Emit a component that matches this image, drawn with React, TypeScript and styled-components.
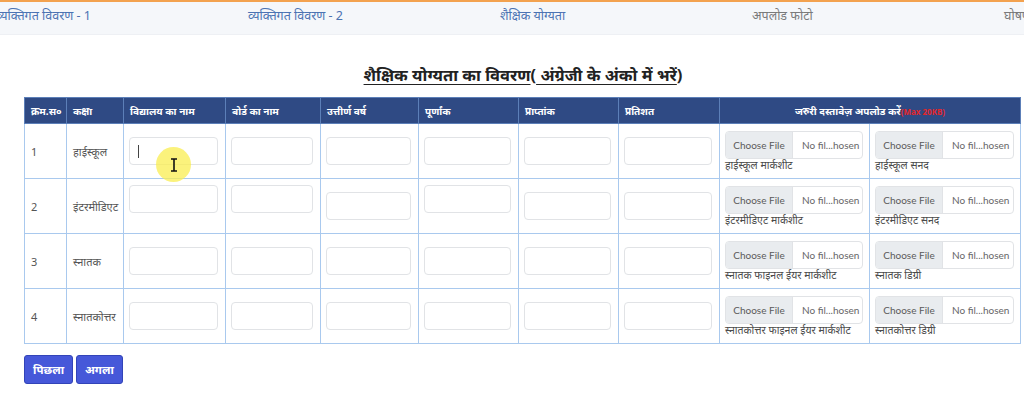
import React from "react";
import styled, { createGlobalStyle } from "styled-components";

const GlobalStyle = createGlobalStyle`
  html, body { margin: 0; padding: 0; background: #ffffff; }
  body { font-family: "Noto Sans", "DejaVu Sans", sans-serif; color: #333; overflow: hidden; }
  * { box-sizing: border-box; }
`;

const Page = styled.div`
  width: 1024px;
  height: 415px;
  position: relative;
  overflow: hidden;
`;

const Nav = styled.nav`
  height: 35px;
  border-top: 2px solid #f3a24f;
  background: #f5f7fa;
  border-bottom: 1px solid #eef0f4;
  display: flex;
  margin-left: -4px;
  overflow: hidden;
`;

const Tab = styled.div<{ $muted?: boolean }>`
  flex: 0 0 252px;
  font-size: 12.5px;
  line-height: 28px;
  color: ${(p) => (p.$muted ? "#7a7a7a" : "#4b73b3")};
  white-space: nowrap;
`;

const Content = styled.div`
  padding: 0 4px 0 24px;
`;

const Heading = styled.h2`
  margin: 28px 0 10px;
  text-align: center;
  font-size: 16.5px;
  line-height: 24px;
  font-weight: 700;
  color: #222;
  padding-left: 2px;
`;

const U = styled.span`
  text-decoration: underline;
  text-underline-offset: 3px;
  text-decoration-thickness: 1px;
`;

const Table = styled.table`
  width: 996px;
  border-collapse: collapse;
  table-layout: fixed;
`;

const Th = styled.th<{ $center?: boolean }>`
  background: #2f4a84;
  color: #ffffff;
  font-size: 10px;
  font-weight: 700;
  height: 26px;
  padding: 0 6px;
  text-align: ${(p) => (p.$center ? "center" : "left")};
  border: 1px solid #5c7fb8;
  white-space: nowrap;
`;

const Red = styled.span`
  color: #e3262b;
  font-size: 8px;
`;

const Td = styled.td<{ $top?: boolean }>`
  height: 55px;
  border: 1px solid #a9c9ee;
  padding: ${(p) => (p.$top ? "6px 7px 0 5px" : "0 7px 0 5px")};
  vertical-align: ${(p) => (p.$top ? "top" : "middle")};
  font-size: 11px;
  color: #555;
  background: #fff;
`;

const TextTd = styled(Td)`
  padding: 0 6px;
`;

const FileTd = styled.td`
  height: 55px;
  border: 1px solid #a9c9ee;
  padding: 7px 6px 0 5px;
  vertical-align: top;
  background: #fff;
`;

const InputWrap = styled.div`
  position: relative;
`;

const TextInput = styled.input`
  display: block;
  width: 100%;
  height: 28px;
  border: 1px solid #e1e3e6;
  border-radius: 4px;
  background: #fff;
  outline: none;
  padding: 0 8px;
  font-size: 12px;
`;

const Caret = styled.span`
  position: absolute;
  left: 9px;
  top: 8px;
  width: 1px;
  height: 13px;
  background: #444;
`;

const FileBox = styled.label`
  display: flex;
  height: 28px;
  border: 1px solid #e1e3e6;
  border-radius: 4px;
  overflow: hidden;
  font-family: Lato, "Noto Sans", sans-serif;
  font-size: 10px;
  color: #666;
  cursor: pointer;
`;

const FileBtn = styled.span`
  flex: 0 0 67px;
  background: #e9ecef;
  border-right: 1px solid #e1e3e6;
  display: flex;
  align-items: center;
  justify-content: center;
  color: #5a5a5a;
`;

const FileName = styled.span`
  flex: 1;
  display: flex;
  align-items: center;
  padding-left: 9px;
  color: #666;
  white-space: nowrap;
`;

const FileLabel = styled.div`
  font-size: 10.5px;
  color: #4a4a4a;
  line-height: 13px;
  white-space: nowrap;
`;

const Actions = styled.div`
  display: flex;
  gap: 3px;
  margin-top: 11px;
`;

const Button = styled.button`
  height: 29px;
  padding: 0 8px;
  background: #4658d9;
  border: 1px solid #3244b8;
  border-radius: 3px;
  color: #fff;
  font-family: "Noto Sans", sans-serif;
  font-size: 11.5px;
  font-weight: 700;
`;

const CursorHalo = styled.div`
  position: absolute;
  left: 156px;
  top: 147px;
  width: 35px;
  height: 35px;
  border-radius: 50%;
  background: rgba(250, 238, 80, 0.75);
  display: flex;
  align-items: center;
  justify-content: center;
  pointer-events: none;
`;

type Row = {
  n: string;
  cls: string;
  docs: [string, string];
  raised: boolean[];
};

const rows: Row[] = [
  { n: "1", cls: "हाईस्कूल", docs: ["हाईस्कूल मार्कशीट", "हाईस्कूल सनद"], raised: [] },
  { n: "2", cls: "इंटरमीडिएट", docs: ["इंटरमीडिएट मार्कशीट", "इंटरमीडिएट सनद"], raised: [true, true, false, true, false, false] },
  { n: "3", cls: "स्नातक", docs: ["स्नातक फाइनल ईयर मार्कशीट", "स्नातक डिग्री"], raised: [] },
  { n: "4", cls: "स्नातकोत्तर", docs: ["स्नातकोत्तर फाइनल ईयर मार्कशीट", "स्नातकोत्तर डिग्री"], raised: [] },
];

const colWidths = [42, 57, 102, 95, 98, 100, 100, 101, 150, 151];

const FileField = ({ label }: { label: string }) => (
  <>
    <FileBox>
      <FileBtn>Choose File</FileBtn>
      <FileName>No fil...hosen</FileName>
    </FileBox>
    <FileLabel>{label}</FileLabel>
  </>
);

export default function App() {
  return (
    <Page>
      <GlobalStyle />
      <Nav>
        <Tab>व्यक्तिगत विवरण - 1</Tab>
        <Tab>व्यक्तिगत विवरण - 2</Tab>
        <Tab>शैक्षिक योग्यता</Tab>
        <Tab $muted>अपलोड फोटो</Tab>
        <Tab $muted>घोषणा</Tab>
      </Nav>
      <Content>
        <Heading>
          <U>शैक्षिक योग्यता का विवरण</U>(<U> अंग्रेजी के अंको में भरें</U>)
        </Heading>
        <Table>
          <colgroup>
            {colWidths.map((w, i) => (
              <col key={i} style={{ width: w }} />
            ))}
          </colgroup>
          <thead>
            <tr>
              <Th>क्रम.स०</Th>
              <Th>कक्षा</Th>
              <Th>विद्यालय का नाम</Th>
              <Th>बोर्ड का नाम</Th>
              <Th>उत्तीर्ण वर्ष</Th>
              <Th>पूर्णांक</Th>
              <Th>प्राप्तांक</Th>
              <Th>प्रतिशत</Th>
              <Th $center colSpan={2}>
                जरुरी दस्तावेज़ अपलोड करें<Red>(Max 20KB)</Red>
              </Th>
            </tr>
          </thead>
          <tbody>
            {rows.map((r, ri) => (
              <tr key={r.n}>
                <TextTd>{r.n}</TextTd>
                <TextTd>{r.cls}</TextTd>
                {[0, 1, 2, 3, 4, 5].map((c) => (
                  <Td key={c} $top={!!r.raised[c]}>
                    <InputWrap>
                      <TextInput type="text" />
                      {ri === 0 && c === 0 && <Caret />}
                    </InputWrap>
                  </Td>
                ))}
                <FileTd>
                  <FileField label={r.docs[0]} />
                </FileTd>
                <FileTd>
                  <FileField label={r.docs[1]} />
                </FileTd>
              </tr>
            ))}
          </tbody>
        </Table>
        <Actions>
          <Button>पिछला</Button>
          <Button>अगला</Button>
        </Actions>
      </Content>
      <CursorHalo>
        <svg width="10" height="14" viewBox="0 0 10 14">
          <path d="M2 1h6M5 1v12M2 13h6" stroke="#111" strokeWidth="1.6" fill="none" />
        </svg>
      </CursorHalo>
    </Page>
  );
}
